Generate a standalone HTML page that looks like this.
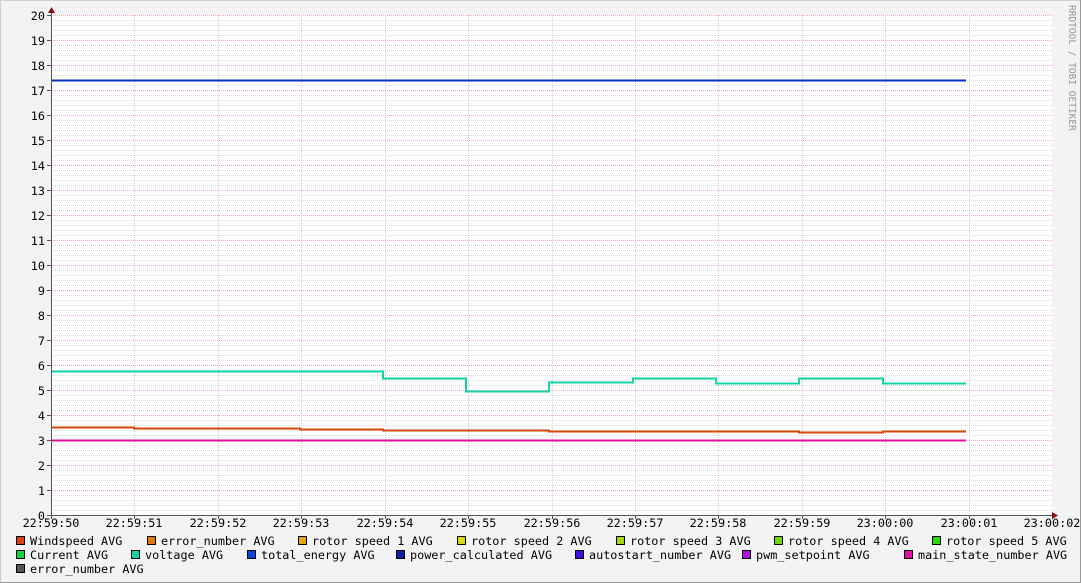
<!DOCTYPE html><html><head><style>body{margin:0;background:#f3f3f3}svg{display:block}text{font-family:"DejaVu Sans Mono","Liberation Mono",monospace;font-size:11.8px;fill:#000}</style></head><body>
<svg width="1081" height="583" xmlns="http://www.w3.org/2000/svg">
<rect x="0" y="0" width="1081" height="583" fill="#f3f3f3"/>
<path d="M0.5 582V0.5H1080" stroke="#cfcfcf" fill="none"/>
<path d="M1080.5 0V582.5H0" stroke="#9a9a9a" fill="none"/>
<rect x="51" y="15" width="1001" height="500" fill="#fff"/>
<g stroke="#dcdcdc" stroke-dasharray="1,1">
<path id="minor" d=""/>
</g>
<g id="grid"></g>
<text x="1066" y="8" transform="rotate(90 1069 8)" style="font-size:9.5px;fill:#999">RRDTOOL / TOBI OETIKER</text>
<g id="lines" fill="none" stroke-width="2">
<path d="M51 80.5H966" stroke="#0a2fc0"/>
<path d="M51 371.5H383V378.5H466V391.5H549V382.5H633V378.5H716V383.5H799V378.5H883V383.5H966" stroke="#15d3a5"/>
<path d="M51 427.5H134V428.5H300V429.5H383V430.5H549V431.5H799V432.5H883V431.5H966" stroke="#d44a0a"/>
<path d="M51 440.5H966" stroke="#e0109a"/>
</g>
<path d="M51.5 9V519M47 515.5H1056" stroke="#555" fill="none"/>
<path d="M48 13L51.5 7L55 13Z M1052 512L1058 515.5L1052 519Z" fill="#8a1010"/>
<g id="legend"></g>
</svg>
<script>
var ns="http://www.w3.org/2000/svg",s=document.querySelector('svg'),g=document.getElementById('grid');
function el(t,a,p){var e=document.createElementNS(ns,t);for(var k in a)e.setAttribute(k,a[k]);(p||g).appendChild(e);return e}
var d="";for(var y=15;y<515;y+=5){if((515-y)%25)d+="M51 "+(y+.5)+"H1052";}
document.getElementById('minor').setAttribute('d',d);
for(var v=0;v<=20;v++){var y=515-v*25;
 if(v>0)el('path',{d:"M51 "+(y+.5)+"H1052",stroke:"#e8b0b0","stroke-dasharray":"1,1"});
 el('path',{d:"M47 "+(y+.5)+"H51",stroke:"#555"});
 var t=el('text',{x:45,y:y+5,"text-anchor":"end"});t.textContent=v;}
var labs=["22:59:50","22:59:51","22:59:52","22:59:53","22:59:54","22:59:55","22:59:56","22:59:57","22:59:58","22:59:59","23:00:00","23:00:01","23:00:02"];
for(var i=0;i<13;i++){var x=Math.round(51+i*1001/12);
 if(i>0&&i<12)el('path',{d:"M"+(x+.5)+" 15V515",stroke:"#d0d0d0","stroke-dasharray":"1,1"});
 el('path',{d:"M"+(x+.5)+" 515V519",stroke:"#555"});
 var t=el('text',{x:x,y:527,"text-anchor":"middle"});t.textContent=labs[i];}
var L=document.getElementById('legend');
var items=[[16,545,"#e0400a","Windspeed AVG"],[147,545,"#e07a0a","error_number AVG"],[298,545,"#e0a80a","rotor speed 1 AVG"],[457,545,"#d8d80a","rotor speed 2 AVG"],[616,545,"#a8d80a","rotor speed 3 AVG"],[774,545,"#70d80a","rotor speed 4 AVG"],[932,545,"#30d80a","rotor speed 5 AVG"],
[16,559,"#10d840","Current AVG"],[131,559,"#15d3a5","voltage AVG"],[247,559,"#1040e0","total_energy AVG"],[396,559,"#1020a0","power_calculated AVG"],[575,559,"#4010e0","autostart_number AVG"],[742,559,"#b010e0","pwm_setpoint AVG"],[904,559,"#e010a0","main_state_number AVG"],
[16,573,"#555555","error_number AVG"]];
items.forEach(function(a){el('rect',{x:a[0]+.5,y:a[1]-8.5,width:8,height:8,fill:a[2],stroke:"#000"},L);var t=el('text',{x:a[0]+14,y:a[1]},L);t.textContent=a[3];});
</script>
</body></html>
